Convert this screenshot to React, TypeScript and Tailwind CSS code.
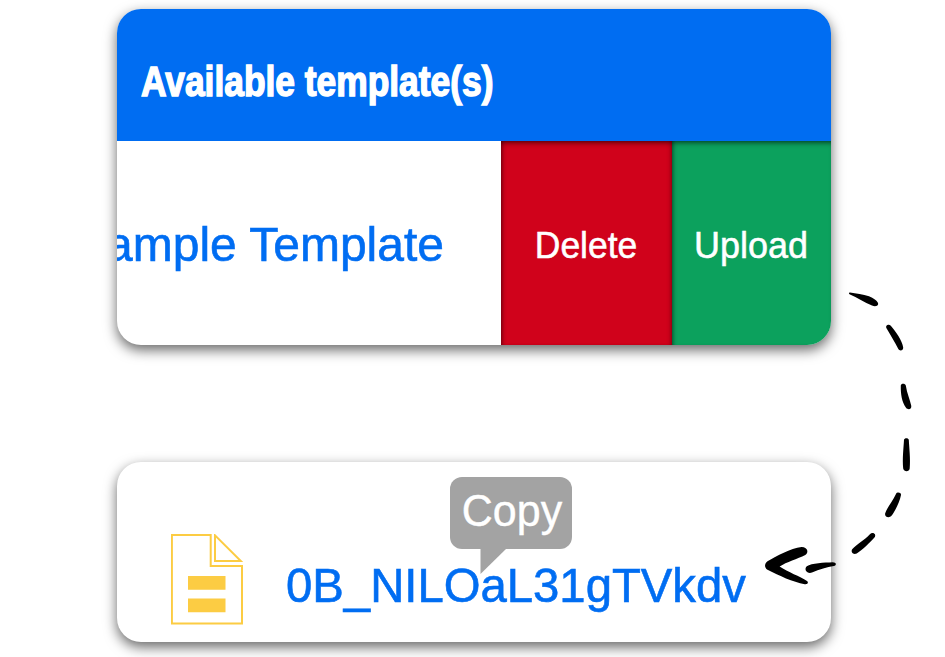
function DocumentIcon() {
  return (
    <svg width="73" height="91" viewBox="171 534 73 91" fill="none" stroke="#fccc43" strokeWidth="2" className="shrink-0">
      <path d="M171.9 535H210.7V566H242V623.4H171.9Z" />
      <path d="M215 535.4V561H240.8Z" />
      <path d="M188 576H225.5V589.8H188ZM188 598.5H225.5V612.2H188Z" fill="#fccc43" stroke="none" />
    </svg>
  );
}

function DashedArrow() {
  return (
    <svg className="pointer-events-none absolute left-0 top-0" width="945" height="657" viewBox="0 0 945 657" fill="#000">
      <path d="M850 292.6C856 293.9 863 294.3 869 296.3C873 297.8 878.5 301.5 878.2 304C877.7 306.5 874.5 306.5 872 305.6C864.5 302.5 857 297.6 850 294.6C848.6 294 848.6 292.4 850 292.6Z" />
      <path d="M886.5 328.2C885 325.4 888.8 323.6 890.8 325.8C895.5 331 902.3 341 903.2 347.5C903.4 350.8 899.5 351.5 898.2 348.8C894.8 341.5 890 334.5 886.5 328.2Z" />
      <path d="M900.8 385.5C901 383 905.2 383 905.8 385.5C907 393.5 910 399.5 911.3 406C911.5 409.6 908 410.2 906 407.8C901.8 402 900.6 394 900.8 385.5Z" />
      <path d="M904 439.8C904.3 437.6 908.5 437.6 908.8 439.8C909.2 448 910.6 459 909.7 468.5C909.2 472.2 904 472.2 903.2 468.5C902.2 459 903.6 448 904 439.8Z" />
      <path d="M896.1 493.7C897.3 491.6 901.5 492.7 901 495C899.6 501.8 895.5 510.5 891.7 515.6C888.9 518.9 884.2 516.7 885.2 513.2C887 507.5 893 500.8 896.1 493.7Z" />
      <path d="M869.9 534.2C872.4 531.7 876.5 533.8 874.9 537C870.5 541.8 862 550.4 856.7 553.5C853.2 555.3 850.2 551.7 852.4 549.1C857 543.9 864.2 540.2 869.9 534.2Z" />
      <path d="M832.5 562.2C836.6 562.1 836.9 565.4 833.8 566.1C827 567.2 819.5 569.6 812 572.6C807.3 574.4 803.4 569.6 806.8 566.3C811.5 562.9 824.5 562.6 832.5 562.2Z" />
      <path d="M801.5 546.9C807.5 546.7 809.2 552.4 805.3 554.9C797.5 558.8 786.5 561.8 779.6 566.5C788 572.2 800 576.3 807 581.1C809 583 807.4 584.6 804.8 584.2C792.5 582.2 779.5 575.6 767.5 569.8C764.2 567.5 764.3 563.6 767.5 561.2C776.5 556.2 790.5 547.9 801.5 546.9Z" />
    </svg>
  );
}

const cardShadow = "shadow-[0_5px_13px_rgba(0,0,0,0.6)]";

export default function App() {
  return (
    <main className="relative flex h-[657px] w-[945px] flex-col gap-[117px] overflow-hidden bg-white pl-[117px] pt-[9px] font-['Liberation_Sans',Arial,sans-serif]">
      <section className={`h-[336px] w-[714px] shrink-0 overflow-hidden rounded-3xl bg-white ${cardShadow}`}>
        <header className="flex h-[132px] items-center bg-[#006df2] pl-6 pt-[13px]">
          <h1 className="origin-left scale-x-[0.842] whitespace-nowrap text-[42px] font-bold leading-none text-white [-webkit-text-stroke:1.5px_white]">
            Available template(s)
          </h1>
        </header>
        <div className="flex h-[204px]">
          <div className="flex w-[384px] items-center justify-end overflow-hidden pr-[57px] pt-[3px]">
            <span className="origin-right scale-y-[1.02] whitespace-nowrap text-[48px] leading-none text-[#006df2] [-webkit-text-stroke:0.6px_#006df2]">Sample Template</span>
          </div>
          <button className="flex w-[171px] items-center justify-center bg-[#d0021b] pr-px pt-1.5 text-[36px] leading-none text-white shadow-[inset_0_5px_5px_-3px_rgba(0,0,0,0.55),inset_4px_0_4px_-3px_rgba(0,0,0,0.5),inset_-4px_0_4px_-3px_rgba(0,0,0,0.35)]">
            <span className="scale-x-[0.985] scale-y-[1.02] [-webkit-text-stroke:0.5px_white]">Delete</span>
          </button>
          <button className="flex w-[159px] items-center justify-center bg-[#0ca15d] pr-px pt-1.5 text-[36px] leading-none text-white shadow-[inset_0_5px_5px_-3px_rgba(0,0,0,0.55),inset_4px_0_4px_-3px_rgba(0,0,0,0.5)]">
            <span className="scale-y-[1.02] [-webkit-text-stroke:0.5px_white]">Upload</span>
          </button>
        </div>
      </section>

      <section className={`flex h-[180px] w-[714px] shrink-0 items-start rounded-3xl bg-white pl-[54px] pt-[72px] ${cardShadow}`}>
        <DocumentIcon />
        <div className="relative ml-[40px] mt-[28px]">
          <span className="ml-[2px] block origin-left scale-x-[0.985] scale-y-[1.02] whitespace-nowrap text-[48px] leading-none text-[#006df2] [-webkit-text-stroke:0.6px_#006df2]">0B_NILOaL31gTVkdv</span>
          <div className="absolute left-[166px] top-[-85px] flex h-[72px] w-[122px] items-center justify-center rounded-xl bg-[#a3a3a3] pb-1 pl-0.5 text-[43px] leading-none text-white">
            <span className="scale-y-[1.02] [-webkit-text-stroke:0.4px_white]">Copy</span>
            <svg className="absolute left-[30px] top-[71px]" width="28" height="27" viewBox="0 0 28 27" fill="#a3a3a3">
              <path d="M.5 0H27L.5 26Z" />
            </svg>
          </div>
        </div>
      </section>
      <DashedArrow />
    </main>
  );
}
